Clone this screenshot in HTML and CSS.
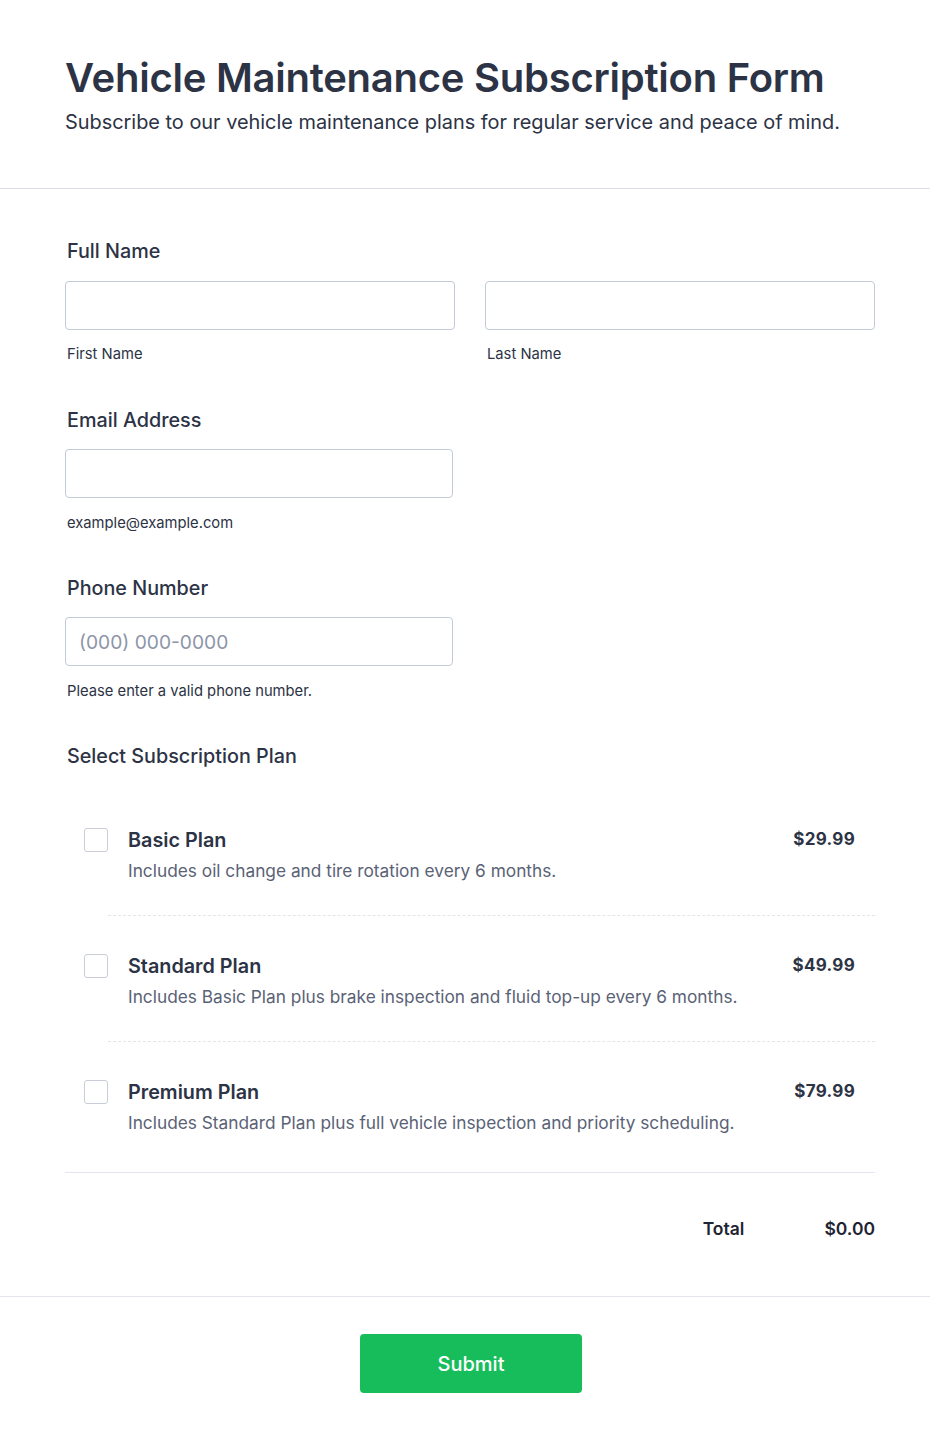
FILE: index.html
```html
<!DOCTYPE html>
<html lang="en">
<head>
<meta charset="utf-8">
<title>Vehicle Maintenance Subscription Form</title>
<link rel="stylesheet" href="styles.css">
</head>
<body>
<div class="page">
  <header class="header">
    <h1 class="title">Vehicle Maintenance Subscription Form</h1>
    <p class="subtitle">Subscribe to our vehicle maintenance plans for regular service and peace of mind.</p>
  </header>
  <form class="form">
    <div class="field first">
      <div class="label">Full Name</div>
      <div class="name-row">
        <div class="col">
          <input class="input" type="text">
          <div class="sublabel">First Name</div>
        </div>
        <div class="col">
          <input class="input" type="text">
          <div class="sublabel">Last Name</div>
        </div>
      </div>
    </div>
    <div class="field">
      <div class="label">Email Address</div>
      <input class="input half" type="email">
      <div class="sublabel">example@example.com</div>
    </div>
    <div class="field">
      <div class="label">Phone Number</div>
      <input class="input half" type="tel" placeholder="(000) 000-0000">
      <div class="sublabel">Please enter a valid phone number.</div>
    </div>
    <div class="field plans-field">
      <div class="label">Select Subscription Plan</div>
      <div class="plans">
        <div class="plan">
          <span class="checkbox"></span>
          <div class="plan-body">
            <div class="plan-title">Basic Plan</div>
            <div class="plan-desc">Includes oil change and tire rotation every 6 months.</div>
          </div>
          <div class="plan-price">$29.99</div>
        </div>
        <div class="plan">
          <span class="checkbox"></span>
          <div class="plan-body">
            <div class="plan-title">Standard Plan</div>
            <div class="plan-desc">Includes Basic Plan plus brake inspection and fluid top-up every 6 months.</div>
          </div>
          <div class="plan-price">$49.99</div>
        </div>
        <div class="plan last">
          <span class="checkbox"></span>
          <div class="plan-body">
            <div class="plan-title">Premium Plan</div>
            <div class="plan-desc">Includes Standard Plan plus full vehicle inspection and priority scheduling.</div>
          </div>
          <div class="plan-price">$79.99</div>
        </div>
      </div>
      <div class="total-row">
        <span class="total-label">Total</span>
        <span class="total-value">$0.00</span>
      </div>
    </div>
  </form>
  <footer class="footer">
    <button class="submit" type="button">Submit</button>
  </footer>
</div>
</body>
</html>
```
FILE: styles.css
```css
* { box-sizing: border-box; }
html, body { margin: 0; padding: 0; background: #fff; }
body {
  font-family: Inter, "Noto Sans", "Liberation Sans", sans-serif;
  color: #2c3345;
}
.page { width: 930px; }
.header {
  padding: 54px 55px 53px 65px;
  border-bottom: 1px solid #dcdcea;
}
.title {
  margin: 0;
  font-size: 40px;
  line-height: 48px;
  font-weight: 600;
  color: #2c3345;
  letter-spacing: -0.25px;
}
.subtitle {
  margin: 7px 0 0;
  font-size: 19.9px;
  line-height: 26px;
  font-weight: 400;
  color: #2c3345;
}
.form {
  padding: 49px 55px 0 65px;
}
.field { margin-bottom: 42px; }
.field.first { margin-bottom: 42.5px; }
.plans-field { margin-bottom: 0; }
.label {
  font-size: 19.75px;
  line-height: 26px;
  font-weight: 500;
  padding-left: 2px;
  margin-bottom: 16.5px;
}
.name-row {
  display: flex;
  gap: 30px;
}
.col { flex: 1; }
.input {
  display: block;
  width: 100%;
  height: 49px;
  border: 1px solid #c3cad8;
  border-radius: 4px;
  background: #fff;
  padding: 0 13px;
  font-family: inherit;
  font-size: 19.2px;
  color: #2c3345;
  outline: none;
}
.input.half { width: 388px; }
.input::placeholder { color: #8d95a8; }
.sublabel {
  font-size: 14.75px;
  line-height: 20px;
  margin-top: 14.5px;
  padding-left: 2px;
  color: #2c3345;
}
.plans { margin-top: 42.5px; }
.plan {
  display: flex;
  align-items: flex-start;
  padding: 16px 20px 33px 19px;
  position: relative;
}
.plan::after {
  content: "";
  position: absolute;
  left: 43px;
  right: 0;
  bottom: 0;
  border-bottom: 1px dashed #e3e5ea;
}
.plan + .plan { padding-top: 37px; }
.plan.last { padding-bottom: 38px; }
.plan.last::after { left: 0; border-bottom: 1px solid #e3e6ee; }
.checkbox {
  width: 24px;
  height: 24px;
  border: 1px solid #c8cdd8;
  border-radius: 3px;
  flex: none;
  margin-top: 1px;
}
.plan-body {
  flex: 1;
  padding-left: 20px;
}
.plan-title {
  font-size: 19.8px;
  line-height: 26px;
  font-weight: 600;
  color: #2c3345;
}
.plan-desc {
  margin-top: 6px;
  font-size: 17.3px;
  line-height: 24px;
  color: #5a6275;
}
.plan-price {
  font-size: 17px;
  line-height: 24px;
  font-weight: 700;
  color: #2c3345;
  letter-spacing: 0.3px;
}
.total-row {
  display: flex;
  justify-content: flex-end;
  align-items: center;
  gap: 80px;
  padding-top: 45px;
  padding-bottom: 57px;
}
.total-label, .total-value {
  font-size: 17.5px;
  font-weight: 600;
  color: #1f2433;
}
.footer {
  border-top: 1px solid #e3e6ee;
  padding: 37px 0 50px;
  display: flex;
  justify-content: center;
}
.submit {
  width: 222px;
  height: 59px;
  border: none;
  border-radius: 4px;
  background: #18bd5b;
  color: #fff;
  font-family: inherit;
  font-size: 20px;
  font-weight: 500;
  cursor: pointer;
  margin-left: 12px;
}
```
